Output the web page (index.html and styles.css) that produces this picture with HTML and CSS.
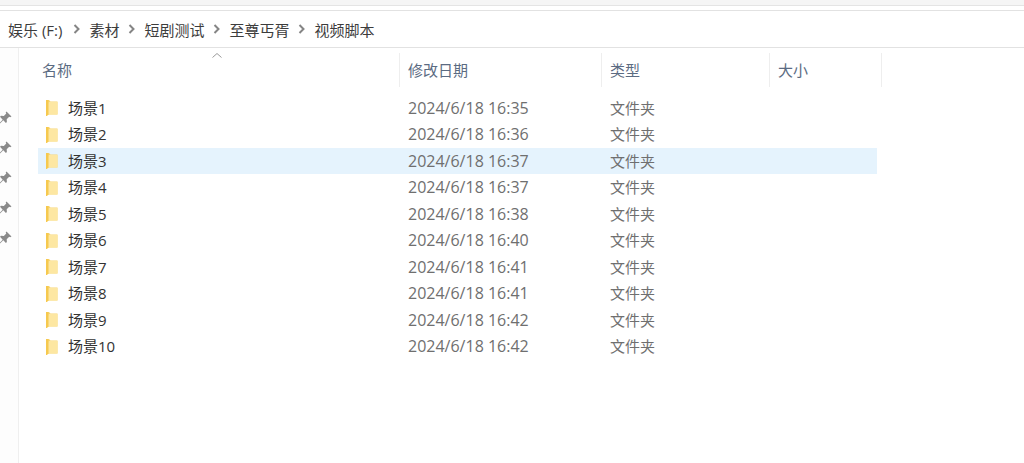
FILE: index.html

```html
<!DOCTYPE html>
<html lang="zh-CN">
<head>
  <meta charset="UTF-8">
  <title>视频脚本</title>
  <link rel="stylesheet" href="styles.css">
</head>
<body>
  <svg class="icon-defs" width="0" height="0">
    <symbol id="folder" viewBox="0 0 13 17">
      <path d="M1 1h3l1.500 1.500H12.500v13H1z" fill="#f8d675"/>
      <path d="M3.500 3H12.500v12.500H3.500L2 17H1z" fill="#fde7a2"/>
      <path d="M1 1h2.500v14.300L1.800 17H1z" fill="#f6c94f"/>
    </symbol>
    <symbol id="pin" viewBox="0 0 14 14">
      <path d="M8.500 .5L13.500 5.500l-1.300 .8-1-.6-2.500 2.500 .2 2.800-1 1L5.300 9.300 1 13.500 .5 13 4.700 8.700 2 5.800l1-1 2.800 .2L8.300 2.500l-.6-1z" fill="#8a8a8a"/>
    </symbol>
    <symbol id="chevron" viewBox="0 0 7 10">
      <path d="M1.500 1L5.500 5l-4 4" fill="none" stroke="#858585" stroke-width="2"/>
    </symbol>
  </svg>

  <div class="top-strip"></div>

  <nav class="address-bar">
    <span class="drive">娱乐 (F:)</span>
    <svg class="chevron"><use href="#chevron"/></svg>
    <span>素材</span>
    <svg class="chevron"><use href="#chevron"/></svg>
    <span>短剧测试</span>
    <svg class="chevron"><use href="#chevron"/></svg>
    <span>至尊丐胥</span>
    <svg class="chevron"><use href="#chevron"/></svg>
    <span>视频脚本</span>
  </nav>

  <div class="main">
    <aside class="sidebar">
      <svg class="pin"><use href="#pin"/></svg>
      <svg class="pin"><use href="#pin"/></svg>
      <svg class="pin"><use href="#pin"/></svg>
      <svg class="pin"><use href="#pin"/></svg>
      <svg class="pin"><use href="#pin"/></svg>
    </aside>

    <section class="files">
      <div class="header">
        <div class="col col-name">名称<svg class="sort" viewBox="0 0 10 5"><path d="M.5 4.500L5 .5l4.500 4" fill="none" stroke="#9a9a9a"/></svg></div>
        <div class="col col-date">修改日期</div>
        <div class="col col-type">类型</div>
        <div class="col col-size">大小</div>
      </div>

      <div class="rows">
        <div class="row">
          <div class="cell-name"><svg class="folder"><use href="#folder"/></svg>场景1</div>
          <div class="cell-date">2024/6/18 16:35</div>
          <div class="cell-type">文件夹</div>
        </div>
        <div class="row">
          <div class="cell-name"><svg class="folder"><use href="#folder"/></svg>场景2</div>
          <div class="cell-date">2024/6/18 16:36</div>
          <div class="cell-type">文件夹</div>
        </div>
        <div class="row selected">
          <div class="cell-name"><svg class="folder"><use href="#folder"/></svg>场景3</div>
          <div class="cell-date">2024/6/18 16:37</div>
          <div class="cell-type">文件夹</div>
        </div>
        <div class="row">
          <div class="cell-name"><svg class="folder"><use href="#folder"/></svg>场景4</div>
          <div class="cell-date">2024/6/18 16:37</div>
          <div class="cell-type">文件夹</div>
        </div>
        <div class="row">
          <div class="cell-name"><svg class="folder"><use href="#folder"/></svg>场景5</div>
          <div class="cell-date">2024/6/18 16:38</div>
          <div class="cell-type">文件夹</div>
        </div>
        <div class="row">
          <div class="cell-name"><svg class="folder"><use href="#folder"/></svg>场景6</div>
          <div class="cell-date">2024/6/18 16:40</div>
          <div class="cell-type">文件夹</div>
        </div>
        <div class="row">
          <div class="cell-name"><svg class="folder"><use href="#folder"/></svg>场景7</div>
          <div class="cell-date">2024/6/18 16:41</div>
          <div class="cell-type">文件夹</div>
        </div>
        <div class="row">
          <div class="cell-name"><svg class="folder"><use href="#folder"/></svg>场景8</div>
          <div class="cell-date">2024/6/18 16:41</div>
          <div class="cell-type">文件夹</div>
        </div>
        <div class="row">
          <div class="cell-name"><svg class="folder"><use href="#folder"/></svg>场景9</div>
          <div class="cell-date">2024/6/18 16:42</div>
          <div class="cell-type">文件夹</div>
        </div>
        <div class="row">
          <div class="cell-name"><svg class="folder"><use href="#folder"/></svg>场景10</div>
          <div class="cell-date">2024/6/18 16:42</div>
          <div class="cell-type">文件夹</div>
        </div>
      </div>
    </section>
  </div>
</body>
</html>
```

FILE: styles.css

```css
html, body {
  height: 100%;
}

body {
  margin: 0;
  background-color: #fff;
  font-family: "Open Sans", "Noto Sans CJK SC", sans-serif;
  font-size: 15px;
  color: #333;
  display: flex;
  flex-direction: column;
  overflow: hidden;
}

.icon-defs {
  position: absolute;
}

.top-strip {
  height: 5px;
  background-color: #f5f5f5;
  border-bottom: 1px solid #e4e4e4;
}

.address-bar {
  margin-top: 4px;
  height: 36px;
  border-top: 1px solid #e2e2e2;
  border-bottom: 1px solid #e2e2e2;
  padding-left: 8px;
  display: flex;
  align-items: center;
  gap: 9px;
  color: #3c3c3c;
}

.drive {
  margin-right: 2px;
}

.chevron {
  width: 7px;
  height: 10px;
}

.main {
  flex: 1;
  display: flex;
}

.sidebar {
  width: 18px;
  border-right: 1px solid #efefef;
  background-color: #fdfdfd;
  padding-top: 63px;
  display: flex;
  flex-direction: column;
  gap: 16px;
}

.pin {
  width: 14px;
  height: 14px;
  flex: none;
  margin-left: -2px;
}

.files {
  flex: 1;
}

.header {
  margin-top: 5px;
  height: 34px;
  display: flex;
  color: #5b6b82;
}

.col {
  box-sizing: border-box;
  height: 34px;
  line-height: 34px;
  padding-left: 8px;
  border-right: 1px solid #eeeeee;
  position: relative;
}

.col-name {
  width: 381px;
  padding-left: 23px;
}

.col-date {
  width: 202px;
}

.col-type {
  width: 168px;
}

.col-size {
  width: 112px;
}

.sort {
  position: absolute;
  left: 193px;
  top: 0;
  width: 10px;
  height: 5px;
}

.rows {
  padding-top: 7.5px;
  padding-left: 19px;
}

.row {
  width: 839px;
  height: 26.5px;
  display: flex;
  align-items: center;
  line-height: 26px;
}

.row.selected {
  background-color: #e5f3fd;
}

.cell-name {
  width: 370px;
  display: flex;
  align-items: center;
  padding-left: 7px;
  box-sizing: border-box;
  gap: 10px;
  color: #333;
}

.folder {
  width: 13px;
  height: 17px;
}

.cell-date {
  width: 202px;
  font-size: 16px;
  color: #6f6f6f;
}

.cell-type {
  color: #6f6f6f;
}
```
